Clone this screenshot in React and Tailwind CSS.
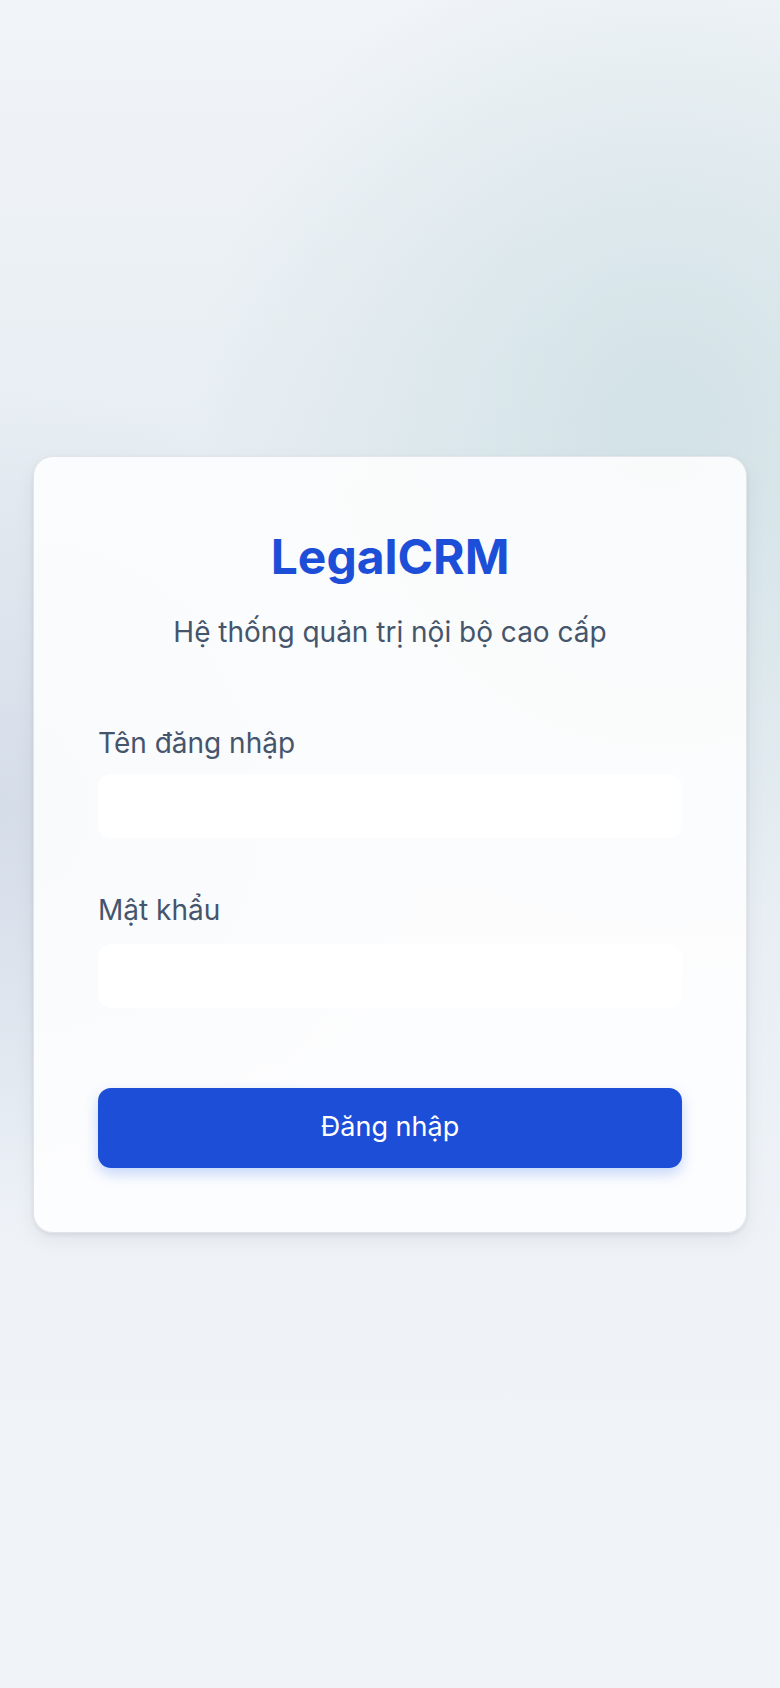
export default function App() {
  return (
    <div
      className="min-h-screen w-full flex items-center justify-center px-[33px] bg-[#eef2f7] bg-[radial-gradient(ellipse_60%_30%_at_85%_25%,#d2e2e6_0%,rgba(210,226,230,0)_100%),radial-gradient(ellipse_55%_25%_at_0%_48%,#d5dde9_0%,rgba(213,221,233,0)_100%),linear-gradient(180deg,#f1f4f8_0%,#e6edf2_30%,#e8eef4_55%,#eff3f8_75%,#f0f3f8_100%)]"
      style={{ fontFamily: "Inter, 'Noto Sans', sans-serif" }}
    >
      <div className="w-full rounded-[20px] border border-[#e1e4e8] bg-white/85 shadow-[0_2px_4px_rgba(0,0,0,0.07),0_8px_20px_rgba(15,23,42,0.06)] p-16 flex flex-col">
        <h1 className="text-center text-[48px] leading-[72px] font-bold text-[#1d4ed8]">
          LegalCRM
        </h1>
        <p className="mt-[21px] text-center text-[28px] leading-9 text-slate-600">
          Hệ thống quản trị nội bộ cao cấp
        </p>

        <label className="mt-[75px] text-[28px] leading-9 text-slate-600">
          Tên đăng nhập
        </label>
        <input
          type="text"
          className="mt-[13px] h-16 w-full rounded-[13px] bg-white outline-none px-4 text-xl"
        />

        <label className="mt-[54px] text-[28px] leading-9 text-slate-600">
          Mật khẩu
        </label>
        <input
          type="password"
          className="mt-4 h-16 w-full rounded-[13px] bg-white outline-none px-4 text-xl"
        />

        <button className="mt-20 h-20 w-full rounded-[13px] bg-[#1d4ed8] text-white text-[27px] shadow-[0_6px_14px_rgba(37,99,235,0.25)]">
          Đăng nhập
        </button>
      </div>
    </div>
  );
}
